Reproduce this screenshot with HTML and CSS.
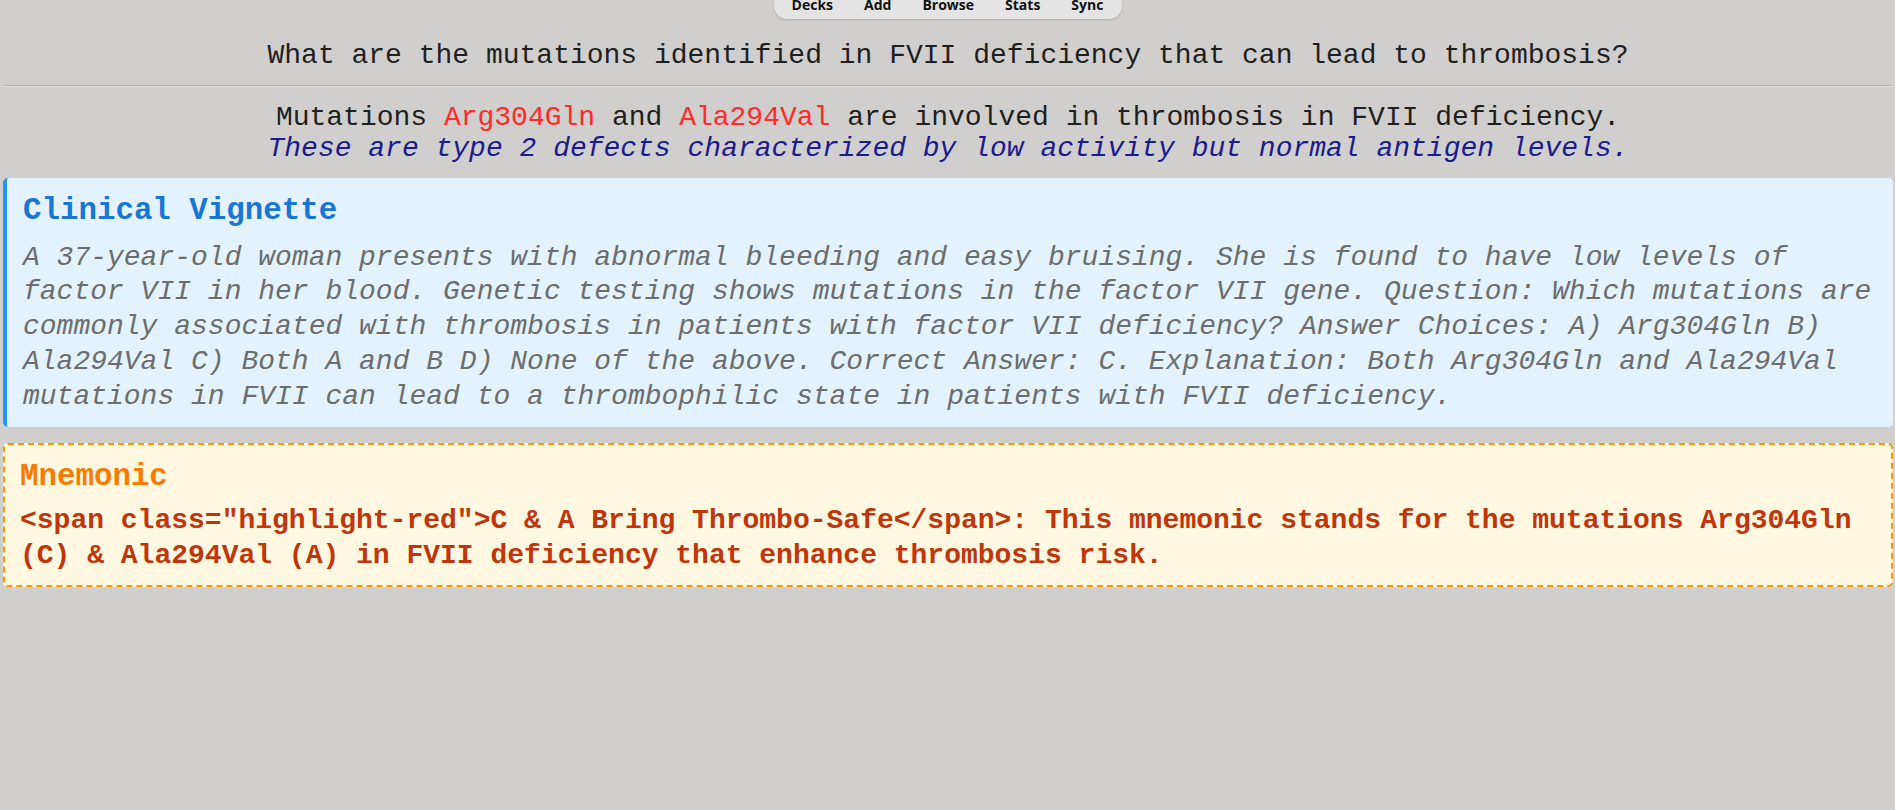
FILE: index.html
```html
<!DOCTYPE html>
<html>
<head>
<meta charset="utf-8">
<link rel="stylesheet" href="styles.css">
</head>
<body>
<nav class="topbar">
  <span class="tab">Decks</span>
  <span class="tab">Add</span>
  <span class="tab">Browse</span>
  <span class="tab">Stats</span>
  <span class="tab">Sync</span>
</nav>
<main class="card">
  <div class="question">What are the mutations identified in FVII deficiency that can lead to thrombosis?</div>
  <hr class="divider">
  <div class="answer">
    <div class="answer-main">Mutations <span class="hl-red">Arg304Gln</span> and <span class="hl-red">Ala294Val</span> are involved in thrombosis in FVII deficiency.</div>
    <div class="answer-note">These are type 2 defects characterized by low activity but normal antigen levels.</div>
  </div>
  <section class="vignette">
    <h2 class="vignette-title">Clinical Vignette</h2>
    <p class="vignette-text">A 37-year-old woman presents with abnormal bleeding and easy bruising. She is found to have low levels of factor VII in her blood. Genetic testing shows mutations in the factor VII gene. Question: Which mutations are commonly associated with thrombosis in patients with factor VII deficiency? Answer Choices: A) Arg304Gln B) Ala294Val C) Both A and B D) None of the above. Correct Answer: C. Explanation: Both Arg304Gln and Ala294Val mutations in FVII can lead to a thrombophilic state in patients with FVII deficiency.</p>
  </section>
  <section class="mnemonic">
    <h2 class="mnemonic-title">Mnemonic</h2>
    <p class="mnemonic-text">&lt;span class="highlight-red"&gt;C &amp; A Bring Thrombo-Safe&lt;/span&gt;: This mnemonic stands for the mutations Arg304Gln (C) &amp; Ala294Val (A) in FVII deficiency that enhance thrombosis risk.</p>
  </section>
</main>
</body>
</html>
```

FILE: styles.css
```css
html, body {
  margin: 0;
  padding: 0;
}
body {
  background: #d0cfcd;
  font-family: "Liberation Mono", "Courier New", monospace;
  font-size: 28px;
  color: #1f1f1f;
}
.topbar {
  display: flex;
  justify-content: center;
  width: 348px;
  height: 27px;
  margin: -8px auto 0;
  box-sizing: border-box;
  background: #e4e4e4;
  border-radius: 0 0 13px 13px;
  box-shadow: 0 1px 2px rgba(0,0,0,0.18);
  font-family: "Open Sans", "Liberation Sans", sans-serif;
  font-weight: 700;
  font-size: 14px;
  color: #111;
  line-height: 20px;
}
.tab {
  padding: 0 15.5px;
  margin-top: 3px;
}
.card {
  padding: 0 2px 0 3px;
}
.question {
  text-align: center;
  line-height: 31px;
  margin-top: 21px;
}
.divider {
  border: 0;
  border-top: 1px solid #b2b1af;
  border-bottom: 1px solid #e0dfdd;
  margin: 14px 1px 15px 1px;
}
.answer {
  text-align: center;
  line-height: 31px;
}
.hl-red {
  color: #ff2a2a;
}
.answer-note {
  font-style: italic;
  color: #1b1b8f;
}
.vignette {
  margin-top: 14px;
  background: #e3f2fd;
  border-left: 4px solid #2196f3;
  border-radius: 5px;
  padding: 15px 16px 13px 16px;
}
.vignette-title {
  margin: 0;
  font-size: 30.8px;
  line-height: 36px;
  font-weight: 700;
  color: #1976d2;
}
.vignette-text {
  margin: 11.5px 0 0;
  font-style: italic;
  color: #6d6d6d;
  line-height: 34.8px;
}
.mnemonic {
  margin-top: 16px;
  background: #fff8e1;
  border: 2px dashed #ff9800;
  border-radius: 5px;
  padding: 14px 15px 11.5px 15px;
}
.mnemonic-title {
  margin: 0;
  font-size: 30.8px;
  line-height: 36px;
  font-weight: 700;
  color: #f57c00;
}
.mnemonic-text {
  margin: 7.6px 0 0;
  font-weight: 700;
  color: #bf360c;
  line-height: 35px;
}
```
